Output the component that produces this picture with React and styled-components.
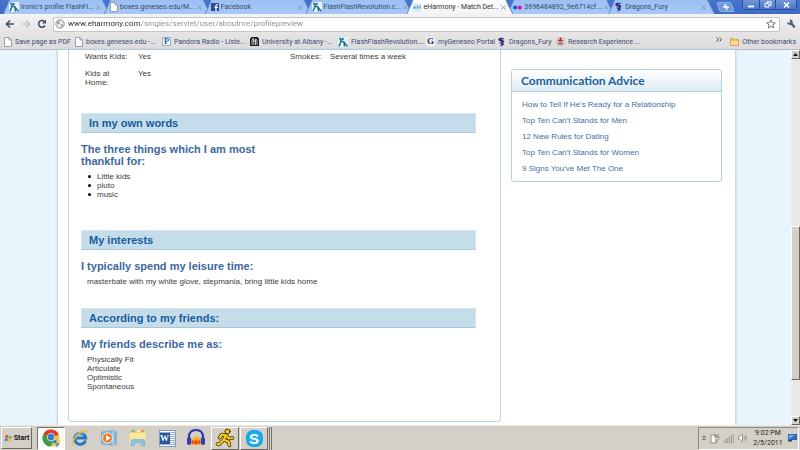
import React from "react";
import styled, { createGlobalStyle, css } from "styled-components";

const GlobalStyle = createGlobalStyle`
  * { box-sizing: border-box; }
  body {
    margin: 0;
    overflow: hidden;
    font-family: "Liberation Sans", Arial, sans-serif;
    font-size: 8px;
    line-height: 9px;
    color: #3c3c3c;
  }
  button {
    font: inherit;
    color: inherit;
    padding: 0;
    border: 0;
    background: none;
  }
  a { text-decoration: none; color: inherit; }
  svg { display: block; flex: none; }
`;

const Desktop = styled.div`
  height: 100vh;
  display: flex;
  flex-direction: column;
`;

/* ---------- browser chrome ---------- */

const uiFont = css`
  font-family: Roboto, "Noto Sans", sans-serif;
  font-size: 7px;
  line-height: 10px;
`;

const TabStrip = styled.header`
  ${uiFont}
  display: flex;
  height: 14px;
  padding-left: 3px;
  background: linear-gradient(#4674cc, #3f6cc4);
`;

const Tabs = styled.nav`
  display: flex;
  flex: 1;
  min-width: 0;
  padding-right: 6px;
`;

const Tab = styled.div`
  position: relative;
  z-index: ${({ $active }) => ($active ? 2 : 1)};
  flex: 1 1 0;
  min-width: 0;
  margin-right: -6px;
  padding: 0 9px 0 6px;
  display: flex;
  align-items: center;
  gap: 2px;
  color: ${({ $active }) => ($active ? "#333" : "#35496b")};
  background: #6089c8;
  clip-path: polygon(6px 0, calc(100% - 7px) 0, 100% 100%, 0 100%);

  &::before {
    content: "";
    position: absolute;
    z-index: -1;
    inset: 0 1px;
    background: ${({ $active }) =>
      $active ? "linear-gradient(#fff, #f3f3f3)" : "linear-gradient(#9cc0f3, #a6c9f8)"};
    clip-path: polygon(6px 0, calc(100% - 7px) 0, 100% 100%, 0 100%);
  }
`;

const TabTitle = styled.a`
  flex: 1 0 auto;
  white-space: nowrap;
`;

const TabClose = styled.button`
  color: #7f93b3;
`;

const NewTab = styled.button`
  width: 15px;
  height: 10px;
  margin: 2px 9px 0 3px;
  display: grid;
  place-items: center;
  background: #7099dc;
  border: 1px solid #8fb2ea;
  border-radius: 2px;
  transform: skewX(20deg);
`;

const WindowButtons = styled.div`
  display: flex;
  height: 10px;
  margin-right: 3px;
  border: 1px solid #284f9f;
  border-top: 0;
  border-radius: 0 0 3px 3px;
`;

const WindowButton = styled.button`
  width: ${({ $wide }) => ($wide ? 21 : 16)}px;
  display: grid;
  place-items: center;
  background: linear-gradient(#7396d8, #4c77c9);
  & + & { border-left: 1px solid #284f9f; }
`;

const Toolbar = styled.div`
  ${uiFont}
  display: flex;
  align-items: center;
  gap: 6px;
  height: 20px;
  padding: 0 4px 0 5px;
  background: linear-gradient(#f3f3f3, #e4e4e4);
`;

const IconButton = styled.button`
  display: grid;
  place-items: center;
`;

const AddressBox = styled.form`
  flex: 1;
  display: flex;
  align-items: center;
  gap: 3px;
  height: 15px;
  padding: 0 3px 0 1px;
  background: #fff;
  border: 1px solid #c4c4c4;
  border-radius: 2px;
`;

/* host part of the address is darker than its path */
const AddressInput = styled.input`
  flex: 1;
  min-width: 0;
  padding: 0;
  border: 0;
  outline: 0;
  font: inherit;
  font-size: 8px;
  line-height: 12px;
  color: transparent;
  background: linear-gradient(90deg, #2b2b2b 72px, #8b8b8b 72px);
  background-clip: text;
`;

const BookmarkBar = styled.nav`
  ${uiFont}
  display: flex;
  align-items: center;
  height: 16px;
  padding: 0 4px;
  background: linear-gradient(#e4e4e4, #dcdcdc);
  border-bottom: 1px solid #b8bdc3;
`;

const Bookmark = styled.a`
  display: flex;
  align-items: center;
  gap: 3px;
  flex: 0 1 ${({ $width }) => $width}px;
  white-space: nowrap;
  color: #3b4b72;
`;

const Chevrons = styled.button`
  margin-left: auto;
  padding: 0 8px 4px 0;
`;

/* ---------- profile page ---------- */

const Viewport = styled.div`
  flex: 1;
  min-height: 0;
  display: flex;
  background: #e8f5fc;
`;

const Sheet = styled.main`
  flex: 1;
  min-width: 0;
  margin: 0 56px 0 58px;
  padding: 0 13px 3px 10px;
  display: grid;
  grid-template-columns: minmax(0, 1fr) 211px;
  gap: 10px;
  background: #fff;
  box-shadow: 0 0 2px 1px #b9cfdd;
`;

const Profile = styled.article`
  padding: 2px 24px 0 12px;
  border: 1px solid #bcd5e6;
  border-top: 0;
  border-radius: 0 0 4px 4px;
`;

const Facts = styled.dl`
  display: grid;
  grid-template-columns: 53px 152px 40px 1fr;
  row-gap: 8px;
  margin: 0 0 26px 4px;
  dt { padding-right: 14px; }
  dt:first-child, dt:nth-of-type(2) { white-space: nowrap; padding-right: 0; }
  dd { margin: 0; }
`;

const Section = styled.section`
  min-height: ${({ $height }) => $height}px;
`;

const Banner = styled.h2`
  margin: 0 0 10px;
  padding: 0 7px;
  font-size: 11px;
  line-height: 18px;
  color: #165c9c;
  background: #c5dcea;
  border: 1px solid #d6e6f0;
  border-bottom-color: #a6c8dd;
`;

const Question = styled.h3`
  width: 210px;
  margin: 0 0 5px;
  font-size: 11px;
  line-height: 12px;
  color: #3c689f;
`;

const Bullets = styled.ul`
  margin: 0;
  padding-left: 7px;
  list-style: none;
  li {
    display: flex;
    align-items: center;
    gap: 6px;
  }
  li::before {
    content: "";
    width: 3px;
    height: 3px;
    border-radius: 50%;
    background: #000;
  }
`;

const Answer = styled.p`
  margin: 0 6px;
`;

const PlainList = styled.ul`
  margin: 0 6px;
  padding: 0;
  list-style: none;
`;

const AdviceBox = styled.aside`
  align-self: start;
  margin-top: 19px;
  border: 1px solid #b5d0e2;
  border-radius: 3px;
  overflow: hidden;
`;

const AdviceTitle = styled.h2`
  margin: 0;
  padding: 0 9px;
  font-family: Lato, "Trebuchet MS", sans-serif;
  font-size: 12px;
  font-weight: 700;
  line-height: 21px;
  color: #1d5f9e;
  background: linear-gradient(#fff, #dcebf4);
  border-bottom: 1px solid #b5d0e2;
`;

const AdviceList = styled.ul`
  margin: 0;
  padding: 5px 10px 4px;
  list-style: none;
  line-height: 16px;
  color: #426fa6;
`;

const ScrollBar = styled.div`
  width: 9px;
  display: flex;
  flex-direction: column;
  background: #eae8e4;
`;

const raised = css`
  background: #d4d0c8;
  border: 1px solid;
  border-color: #fff #6a6862 #6a6862 #fff;
`;

const ScrollArrow = styled.button`
  ${raised}
  height: 9px;
  display: grid;
  place-items: center;
`;

const ScrollTrack = styled.div`
  flex: 1;
  padding-top: 167px;
`;

const ScrollThumb = styled.div`
  ${raised}
  height: 154px;
`;

/* ---------- taskbar ---------- */

const TaskBar = styled.footer`
  display: flex;
  align-items: center;
  height: 25px;
  padding: 0 1px;
  background: #d4d0c8;
  border-top: 1px solid #ebe9e5;
`;

const StartButton = styled.button`
  ${raised}
  width: 31px;
  height: 22px;
  margin-right: 5px;
  display: flex;
  align-items: center;
  justify-content: center;
  gap: 1px;
  font-family: Roboto, sans-serif;
  font-weight: 700;
  font-size: 7px;
  color: #111;
`;

const TaskButton = styled.button`
  width: 28px;
  height: 23px;
  margin-right: 1px;
  display: grid;
  place-items: center;
  border: 1px solid transparent;
  ${({ $look }) => $look === "raised" && raised}
  ${({ $look }) =>
    $look === "pressed" &&
    css`
      background: #fbfbfa;
      border-color: #77746c #fff #fff #77746c;
    `}
`;

const StackEdge = styled.span`
  width: 2px;
  height: 23px;
  margin-left: -1px;
  margin-right: 1px;
  border-right: 1px solid #77746c;
`;

const Tray = styled.div`
  ${uiFont}
  margin-left: auto;
  height: 23px;
  padding: 0 1px 0 3px;
  display: flex;
  align-items: center;
  gap: 4px;
  border: 1px solid;
  border-color: #8f8c85 #fff #fff #8f8c85;
  color: #222;
`;

const Clock = styled.time`
  width: 32px;
  text-align: center;
  white-space: nowrap;
`;

/* ---------- icons ---------- */

const PageIcon = () => (
  <svg width="8" height="10" viewBox="0 0 8 10">
    <path d="M.5.5h4.500L7.500 3v6.500h-7z" fill="#fff" stroke="#8a8a8a" strokeWidth=".8" />
    <path d="M5 .5V3h2.500" fill="none" stroke="#8a8a8a" strokeWidth=".8" />
  </svg>
);

const RunnerIcon = () => (
  <svg width="10" height="10" viewBox="0 0 10 10">
    <rect width="10" height="10" fill="#e8f4fa" />
    <g fill="none" stroke="#1d7096" strokeWidth="1.500">
      <path d="M1.500.5L3 4 1 9.500M3 4l3 1 .5 4.500M5.500 4.500L9.500 9.500" />
    </g>
    <circle cx="4.500" cy="2" r="1.300" fill="#1d7096" />
  </svg>
);

const FacebookIcon = () => (
  <svg width="8" height="8" viewBox="0 0 8 8">
    <rect width="8" height="8" rx=".5" fill="#2f4b90" />
    <path d="M7 1.500H6c-1 0-1 .6-1 1.300V8M3.500 4.300H7" fill="none" stroke="#fff" strokeWidth="1.200" />
  </svg>
);

const Glyph = styled.span`
  flex: none;
  width: 9px;
  height: 9px;
  text-align: center;
  font: ${({ $serif }) => ($serif ? 'bold 9px/9px "Liberation Serif", serif' : 'bold 6px/8px "Liberation Sans", sans-serif')};
  color: ${({ $color }) => $color};
  background: ${({ $fill }) => $fill};
  ${({ $framed }) => $framed && "border: 1px solid #8fb0d0; line-height: 7px;"}
`;

const FlickrIcon = () => (
  <svg width="9" height="9" viewBox="0 0 9 9">
    <circle cx="2.200" cy="4.500" r="2.100" fill="#0b5ad8" />
    <circle cx="6.800" cy="4.500" r="2.100" fill="#f0157f" />
  </svg>
);

const DragonIcon = () => (
  <svg width="9" height="10" viewBox="0 0 9 10">
    <path d="M1 2l3-1.500 3 1-1 1.500 1.500 1.500L6 6l1 1.500L4.500 9.500 3 9l1.500-2L2 6l2-1.500L2 4z" fill="#25246e" />
    <path d="M4 2l2 1M3 5l2 .5M5 8L4 9" stroke="#b9b6ef" strokeWidth=".8" />
    <path d="M1 2l1.500 1.500" stroke="#b64a6e" strokeWidth=".8" />
  </svg>
);

const AlbanyIcon = () => (
  <svg width="9" height="9" viewBox="0 0 9 9">
    <path d="M1.500 0h6L9 2v7H0V2z" fill="#191919" />
    <path d="M2 8V3l1.500-2L4 8M5.500 8V2L7 3v5M3 4h3" fill="none" stroke="#eee" strokeWidth=".8" />
  </svg>
);

const SealIcon = () => (
  <svg width="9" height="9" viewBox="0 0 9 9">
    <circle cx="4.500" cy="4.500" r="4" fill="#f2dede" stroke="#c08080" strokeWidth=".6" />
    <path d="M2 3.500h5M2.500 5h4M2 6.800h5" stroke="#943c3c" />
    <circle cx="4.500" cy="2" r="1.200" fill="#943c3c" />
  </svg>
);

const FolderIcon = () => (
  <svg width="9" height="9" viewBox="0 0 9 9">
    <path d="M.5 1.500h3l1 1h4v6h-8z" fill="#f0bf62" stroke="#c98f35" strokeWidth=".7" />
    <path d="M1 4h7v4H1z" fill="#fbdd98" />
  </svg>
);

const BackIcon = () => (
  <svg width="10" height="10" viewBox="0 0 10 10">
    <path d="M9 5H2M5 1.500L1.500 5 5 8.500" fill="none" stroke="#45515f" strokeWidth="1.700" />
  </svg>
);

const ForwardIcon = () => (
  <svg width="10" height="10" viewBox="0 0 10 10">
    <path d="M1 5h7M5 1.500L8.500 5 5 8.500" fill="none" stroke="#c3c5c7" strokeWidth="1.700" />
  </svg>
);

const ReloadIcon = () => (
  <svg width="10" height="10" viewBox="0 0 10 10">
    <path d="M8 6.500A3.400 3.400 0 1 1 7.300 2.400" fill="none" stroke="#45515f" strokeWidth="1.600" />
    <path d="M9 .5v4H5z" fill="#45515f" />
  </svg>
);

const GlobeIcon = () => (
  <svg width="10" height="10" viewBox="0 0 10 10">
    <circle cx="5" cy="5" r="4.200" fill="#eee" stroke="#8d8d8d" />
    <path d="M2 2.500l2.500-.5L5 4 3.500 6 2 4.500zM6 5l2 .5L7 8l-1.500-.5z" fill="#a2a2a2" />
  </svg>
);

const StarIcon = () => (
  <svg width="10" height="10" viewBox="0 0 10 10">
    <path d="M5 .8l1.200 2.900 3.100.2L6.900 6l.8 3L5 7.400 2.300 9l.8-3L.7 3.900l3.100-.2z" fill="#fff" stroke="#5d6c80" strokeWidth=".9" />
  </svg>
);

const WrenchIcon = () => (
  <svg width="10" height="10" viewBox="0 0 10 10">
    <path d="M1 3l2 1 1.200-1.200L3.500.6C6 .3 7 2 6.600 4L9.500 7.500 8 9.200 4.800 5.800C2.500 6.200.8 5 1 3z" fill="#536071" />
  </svg>
);

const WindowsFlag = () => (
  <svg width="9" height="9" viewBox="0 0 9 9">
    <path d="M1.500 1.500q1.500-1 3 0L4 4q-1.500-1-3 0z" fill="#e5532c" />
    <path d="M5 1.700q1.500 1 3 0L7.500 4.200q-1.500 1-3 0z" fill="#7cb342" />
    <path d="M.9 4.700q1.500-1 3 0l-.5 2.500q-1.500-1-3 0z" fill="#3f7fd6" />
    <path d="M4.400 4.900q1.500 1 3 0L6.900 7.400q-1.500 1-3 0z" fill="#f5bd2c" />
  </svg>
);

const ChromeIcon = () => (
  <svg width="20" height="20" viewBox="0 0 20 20">
    <circle cx="10" cy="10" r="8.500" fill="#f2c51d" />
    <path d="M10 10L2.600 5.700A8.500 8.500 0 0 1 17.700 6.500z" fill="#d8342b" />
    <path d="M10 10L2.600 5.700A8.500 8.500 0 0 0 9.500 18.500L13 12z" fill="#3f9c47" />
    <path d="M5 3.500q6-4 11 1.500L10 6z" fill="#e23d33" />
    <circle cx="10" cy="9" r="4" fill="#d9dee6" />
    <circle cx="10" cy="9" r="3.200" fill="#3b7bc4" />
    <path d="M11.500 12.500q3-.2 4-1.500 1.200 1.300 3.500 1.500 0 5-3.500 6.500-4-1.500-4-6.500z" fill="#2f75d0" stroke="#eee" strokeWidth=".5" />
    <path d="M15.500 11.300v3.900h3.300q.2-1.500.2-2.700-2.300-.1-3.500-1.200zM11.900 15.200h3.600v3.600q-2.800-1.200-3.600-3.600z" fill="#fbd33c" />
  </svg>
);

const IeIcon = () => (
  <svg width="18" height="18" viewBox="0 0 18 18">
    <path d="M14.500 11.500A5.500 5.500 0 1 1 14.700 9H5" fill="none" stroke="#2377c5" strokeWidth="3" />
    <path d="M4 7a5.500 5.500 0 0 1 9-1.500" fill="none" stroke="#62b4ec" strokeWidth="1" />
    <path d="M2.500 16.500C-1 15 5 5.500 11 2.500c3-1.500 5.500-1.500 5 1.500" fill="none" stroke="#f0bf36" strokeWidth="1.500" />
  </svg>
);

const MediaIcon = () => (
  <svg width="18" height="18" viewBox="0 0 18 18">
    <path d="M1.500 3L13 1.500l3.500 1.500v12L13 16.500 1.500 15z" fill="#86b9dc" stroke="#71a0c2" strokeWidth=".6" />
    <path d="M13 1.500v15" stroke="#c1dff1" />
    <circle cx="7.500" cy="9" r="5" fill="#ed7623" stroke="#fff" strokeWidth=".8" />
    <path d="M6 6l4.800 3L6 12z" fill="#fff" />
  </svg>
);

const ExplorerIcon = () => (
  <svg width="20" height="20" viewBox="0 0 20 20">
    <path d="M1.500 4h5l1-2h9l1 2v12h-16z" fill="#edcf79" />
    <path d="M3 3h4" stroke="#4caf50" />
    <path d="M9 3h3" stroke="#fff" />
    <path d="M13 3h3" stroke="#d95745" />
    <path d="M1.500 5h16.500v11H1.500z" fill="#f9e7a4" />
    <path d="M3 17.500v-4q0-2 2-2h10q2 0 2 2v4h-3.500V15h-7v2.500z" fill="#86c5e6" stroke="#61a4cc" strokeWidth=".5" />
  </svg>
);

const WordArt = styled.span`
  display: grid;
  grid-template-columns: 10px 7px;
  width: 17px;
  height: 17px;
  border: 1px solid #7c9ccd;
  background: repeating-linear-gradient(#fff 0 1px, #91aedb 1px 2px);
`;

const WordLetter = styled.span`
  height: 11px;
  align-self: center;
  color: #fff;
  background: #2c559e;
  font: bold 9px/11px "Liberation Serif", serif;
`;

const AudacityIcon = () => (
  <svg width="20" height="20" viewBox="0 0 20 20">
    <path d="M3 12V9q0-7 7-7t7 7v3" fill="none" stroke="#2938b0" strokeWidth="2" />
    <path d="M4 13l1.500-3L7 12l1-4 1.500 3L11 6l1.500 5L14 9l2 4-1 4H5z" fill="#f6aa1c" />
    <path d="M5 14l2-2 1.500 2 1.500-3 1.500 3 1.500-2 2 2-2 2-1.500-1-1.500 2-2-2-1.500 1z" fill="#e04a22" />
    <rect x="1" y="9" width="4" height="8" rx="2" fill="#2a3cc2" />
    <rect x="15" y="9" width="4" height="8" rx="2" fill="#2a3cc2" />
  </svg>
);

const AimPath = "M11 7.500L8.500 12 4 16.500 2.500 16M9.500 12l4 1.500 1 4M11 7.500L7 6.500 4.500 9.500M11.500 8l2.500 2.500 3.500-.5";

const AimIcon = () => (
  <svg width="20" height="20" viewBox="0 0 20 20" strokeLinecap="round" strokeLinejoin="round">
    <path d={AimPath} fill="none" stroke="#3d3000" strokeWidth="3.600" />
    <circle cx="12.500" cy="3.500" r="2.500" fill="#f8cd13" stroke="#3d3000" />
    <path d={AimPath} fill="none" stroke="#f8cd13" strokeWidth="2.200" />
  </svg>
);

const SkypeMark = styled.span`
  width: 17px;
  height: 17px;
  border-radius: 7px;
  color: #fff;
  background: radial-gradient(#29b5ee, #13a0e2);
  font: bold 15px/17px "Liberation Sans", sans-serif;
`;

const PlugIcon = () => (
  <svg width="10" height="11" viewBox="0 0 10 11">
    <path d="M1 2h5v8H1zM5 1v3M8 1v3M4.500 4h4.500q0 3-2.300 3V10" fill="#f6f5f2" stroke="#7b7973" strokeWidth=".8" />
  </svg>
);

const SignalIcon = () => (
  <svg width="10" height="9" viewBox="0 0 10 9">
    <path d="M0 7h1.500v2H0zM2 5.500h1.500V9H2zM4 4h1.500v5H4zM6 2.500h1.500V9H6zM8 1h1.500v8H8z" fill="#f1efeb" stroke="#85837d" strokeWidth=".6" />
  </svg>
);

const SpeakerIcon = () => (
  <svg width="10" height="10" viewBox="0 0 10 10">
    <path d="M.5 3.500H2L4.500 1v8L2 6.500H.5z" fill="#f8f7f5" stroke="#7b7973" strokeWidth=".7" />
    <path d="M6 3.500q1 1.500 0 3M7.500 2q2 3 0 6" fill="none" stroke="#7b7973" strokeWidth=".7" />
  </svg>
);

const DesktopIcon = () => (
  <svg width="9" height="8" viewBox="0 0 9 8">
    <path d="M0 0h9v6H0z" fill="#2f66c0" />
    <path d="M1 1h6L1 5z" fill="#78a9ea" />
    <path d="M0 6h4v1.500H0z" fill="#23497f" />
  </svg>
);

/* ---------- data ---------- */

const tabs = [
  { title: "ironic's profile FlashFl...", icon: <RunnerIcon /> },
  { title: "boxes.geneseo.edu/M...", icon: <PageIcon /> },
  { title: "Facebook", icon: <FacebookIcon /> },
  { title: "FlashFlashRevolution.c...", icon: <RunnerIcon /> },
  { title: "eHarmony - Match Det...", icon: <Glyph $color="#4e9cc4" $fill="#d9effa">eH</Glyph>, active: true },
  { title: "3696484892_9e6714cf...", icon: <FlickrIcon /> },
  { title: "Dragons_Fury", icon: <DragonIcon /> },
];

const bookmarks = [
  { title: "Save page as PDF", icon: <PageIcon />, width: 71 },
  { title: "boxes.geneseo.edu -...", icon: <PageIcon />, width: 87 },
  { title: "Pandora Radio - Liste...", icon: <Glyph $serif $framed $color="#34618f" $fill="#fff">P</Glyph>, width: 88 },
  { title: "University at Albany -...", icon: <AlbanyIcon />, width: 88 },
  { title: "FlashFlashRevolution....", icon: <RunnerIcon />, width: 88 },
  { title: "myGeneseo Portal", icon: <Glyph $serif $color="#262a80" $fill="#f2f2f6">G</Glyph>, width: 71 },
  { title: "Dragons_Fury", icon: <DragonIcon />, width: 59 },
  { title: "Research Experience ...", icon: <SealIcon />, width: 90 },
];

const advice = [
  "How to Tell If He's Ready for a Relationship",
  "Top Ten Can't Stands for Men",
  "12 New Rules for Dating",
  "Top Ten Can't Stands for Women",
  "9 Signs You've Met The One",
];

const Browser = () => (
  <>
    <TabStrip>
      <Tabs>
        {tabs.map(({ title, icon, active }) => (
          <Tab key={title} $active={active}>
            {icon}
            <TabTitle href="#">{title}</TabTitle>
            <TabClose aria-label="Close tab">
              <svg width="5" height="5" viewBox="0 0 5 5">
                <path d="M.5.5l4 4m0-4l-4 4" stroke="currentColor" />
              </svg>
            </TabClose>
          </Tab>
        ))}
      </Tabs>
      <NewTab aria-label="New tab">
        <svg width="6" height="6" viewBox="0 0 6 6">
          <path d="M3 0v6M0 3h6" stroke="#fff" strokeWidth="1.500" />
        </svg>
      </NewTab>
      <WindowButtons>
        <WindowButton aria-label="Minimize">
          <svg width="8" height="6" viewBox="0 0 8 6"><path d="M1 4.500h6" stroke="#fff" strokeWidth="1.800" /></svg>
        </WindowButton>
        <WindowButton aria-label="Restore">
          <svg width="8" height="7" viewBox="0 0 8 7">
            <path d="M3 2V.7h4V4.500H5.500M1 2.500h4V6H1z" fill="none" stroke="#fff" />
          </svg>
        </WindowButton>
        <WindowButton $wide aria-label="Close">
          <svg width="7" height="6" viewBox="0 0 7 6"><path d="M1 .5l5 5m0-5l-5 5" stroke="#fff" strokeWidth="1.500" /></svg>
        </WindowButton>
      </WindowButtons>
    </TabStrip>
    <Toolbar>
      <IconButton aria-label="Back"><BackIcon /></IconButton>
      <IconButton aria-label="Forward"><ForwardIcon /></IconButton>
      <IconButton aria-label="Reload"><ReloadIcon /></IconButton>
      <AddressBox>
        <GlobeIcon />
        <AddressInput
          aria-label="Address"
          defaultValue="www.eharmony.com/singles/servlet/user/aboutme/profilepreview"
        />
        <IconButton type="button" aria-label="Bookmark this page"><StarIcon /></IconButton>
      </AddressBox>
      <IconButton aria-label="Settings"><WrenchIcon /></IconButton>
    </Toolbar>
    <BookmarkBar>
      {bookmarks.map(({ title, icon, width }) => (
        <Bookmark key={title} href="#" $width={width}>{icon}{title}</Bookmark>
      ))}
      <Chevrons aria-label="More bookmarks">
        <svg width="6" height="5" viewBox="0 0 6 5">
          <path d="M.5.500l2 2-2 2M3.500.500l2 2-2 2" fill="none" stroke="#444" />
        </svg>
      </Chevrons>
      <Bookmark href="#" $width={61}><FolderIcon />Other bookmarks</Bookmark>
    </BookmarkBar>
  </>
);

const ProfilePage = () => (
  <Sheet>
    <Profile>
      <Facts>
        <dt>Wants Kids:</dt>
        <dd>Yes</dd>
        <dt>Smokes:</dt>
        <dd>Several times a week</dd>
        <dt>Kids at Home:</dt>
        <dd>Yes</dd>
      </Facts>
      <Section $height={117}>
        <Banner>In my own words</Banner>
        <Question>The three things which I am most thankful for:</Question>
        <Bullets>
          <li>Little kids</li>
          <li>pluto</li>
          <li>music</li>
        </Bullets>
      </Section>
      <Section $height={78}>
        <Banner>My interests</Banner>
        <Question>I typically spend my leisure time:</Question>
        <Answer>masterbate with my white glove, stepmania, bring little kids home</Answer>
      </Section>
      <Section>
        <Banner>According to my friends:</Banner>
        <Question>My friends describe me as:</Question>
        <PlainList>
          <li>Physically Fit</li>
          <li>Articulate</li>
          <li>Optimistic</li>
          <li>Spontaneous</li>
        </PlainList>
      </Section>
    </Profile>
    <AdviceBox>
      <AdviceTitle>Communication Advice</AdviceTitle>
      <AdviceList>
        {advice.map((item) => (
          <li key={item}><a href="#">{item}</a></li>
        ))}
      </AdviceList>
    </AdviceBox>
  </Sheet>
);

const Arrow = ({ down }) => (
  <svg width="5" height="3" viewBox="0 0 5 3">
    <path d={down ? "M0 0h5L2.500 3z" : "M0 3h5L2.500 0z"} fill="#111" />
  </svg>
);

const App = () => (
  <Desktop>
    <GlobalStyle />
    <Browser />
    <Viewport>
      <ProfilePage />
      <ScrollBar>
        <ScrollArrow aria-label="Scroll up"><Arrow /></ScrollArrow>
        <ScrollTrack><ScrollThumb /></ScrollTrack>
        <ScrollArrow aria-label="Scroll down"><Arrow down /></ScrollArrow>
      </ScrollBar>
    </Viewport>
    <TaskBar>
      <StartButton><WindowsFlag />Start</StartButton>
      <TaskButton $look="pressed" aria-label="Chrome"><ChromeIcon /></TaskButton>
      <TaskButton aria-label="Internet Explorer"><IeIcon /></TaskButton>
      <TaskButton aria-label="Media Player"><MediaIcon /></TaskButton>
      <TaskButton aria-label="Explorer"><ExplorerIcon /></TaskButton>
      <TaskButton aria-label="Word"><WordArt><WordLetter>W</WordLetter></WordArt></TaskButton>
      <TaskButton aria-label="Audacity"><AudacityIcon /></TaskButton>
      <TaskButton $look="raised" aria-label="AIM"><AimIcon /></TaskButton>
      <TaskButton $look="raised" aria-label="Skype"><SkypeMark>S</SkypeMark></TaskButton>
      <StackEdge />
      <StackEdge />
      <Tray>
        <svg width="4" height="6" viewBox="0 0 4 6">
          <path d="M.5 2.500L2 1l1.500 1.500M.5 5L2 3.500 3.500 5" fill="none" stroke="#333" strokeWidth=".9" />
        </svg>
        <PlugIcon />
        <SignalIcon />
        <SpeakerIcon />
        <Clock>9:02 PM<br />2/5/2011</Clock>
        <DesktopIcon />
      </Tray>
    </TaskBar>
  </Desktop>
);

export default App;
